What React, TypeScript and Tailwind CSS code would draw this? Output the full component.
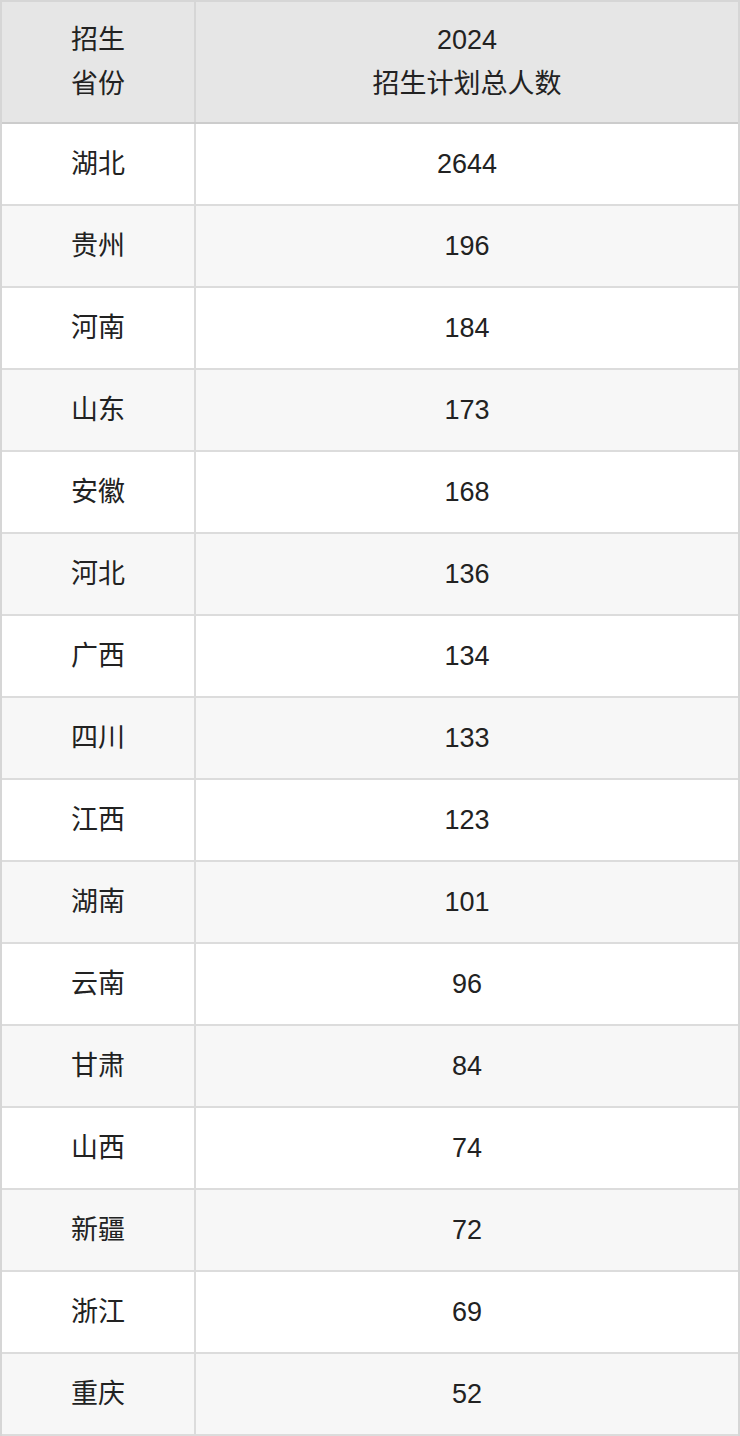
import React from 'react';

const rows: [string, string][] = [
    ['湖北', '2644'],
    ['贵州', '196'],
    ['河南', '184'],
    ['山东', '173'],
    ['安徽', '168'],
    ['河北', '136'],
    ['广西', '134'],
    ['四川', '133'],
    ['江西', '123'],
    ['湖南', '101'],
    ['云南', '96'],
    ['甘肃', '84'],
    ['山西', '74'],
    ['新疆', '72'],
    ['浙江', '69'],
    ['重庆', '52'],
];

const font = "font-['Liberation_Sans','Noto_Sans_CJK_SC',sans-serif]";

export default function App() {
    return (
        <div className={`w-[740px] bg-white text-[27px] text-[#222] ${font}`}>
            <div className="border-x-2 border-t-2 border-[#d6d6d6]">
                {/* header */}
                <div className="flex h-[122px] bg-[#e6e6e6] border-b-2 border-[#cccccc]">
                    <div className="w-[194px] border-r-2 border-[#d6d6d6] flex items-center justify-center text-center leading-[44px]">
                        <div>
                            招生
                            <br />
                            省份
                        </div>
                    </div>
                    <div className="flex-1 flex items-center justify-center text-center leading-[44px]">
                        <div>
                            2024
                            <br />
                            招生计划总人数
                        </div>
                    </div>
                </div>

                {rows.map(([province, count], i) => (
                    <div
                        key={province}
                        className={`flex h-[82px] border-b-2 border-[#dcdcdc] ${
                            i % 2 === 1 ? 'bg-[#f7f7f7]' : 'bg-white'
                        }`}
                    >
                        <div className="w-[194px] border-r-2 border-[#dcdcdc] flex items-center justify-center">
                            {province}
                        </div>
                        <div className="flex-1 flex items-center justify-center">{count}</div>
                    </div>
                ))}
            </div>
        </div>
    );
}
